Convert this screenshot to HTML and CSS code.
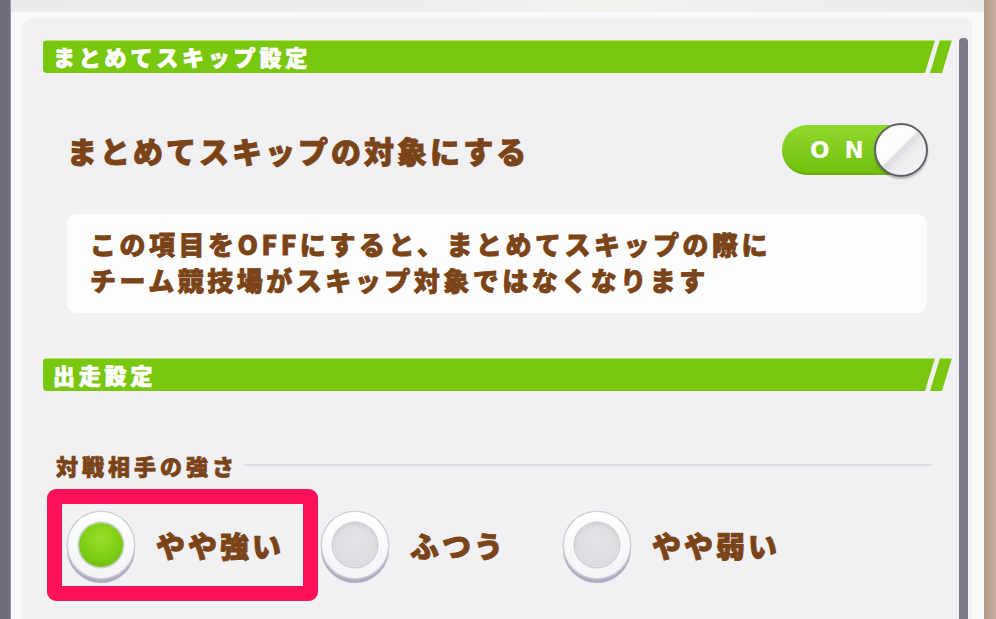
FILE: index.html
```html
<!DOCTYPE html>
<html lang="ja">
<head>
<meta charset="utf-8">
<title>設定</title>
<link rel="stylesheet" href="styles.css">
</head>
<body>
<div class="screen">
  <div class="edge-left"></div>
  <div class="frame">
    <div class="topband"></div>
    <div class="frame-body">
      <div class="panel">
        <div class="scrollbar"></div>

        <div class="section-bar">
          <div class="section-main">まとめてスキップ設定</div>
          <div class="section-stripe"></div>
        </div>

        <div class="setting-row">
          <div class="setting-title">まとめてスキップの対象にする</div>
          <div class="toggle">
            <div class="toggle-track">ON</div>
            <div class="toggle-knob"></div>
          </div>
        </div>

        <div class="note">
          <div>この項目をOFFにすると、まとめてスキップの際に</div>
          <div>チーム競技場がスキップ対象ではなくなります</div>
        </div>

        <div class="section-bar section-gap">
          <div class="section-main">出走設定</div>
          <div class="section-stripe"></div>
        </div>

        <div class="subhead">対戦相手の強さ</div>

        <div class="radios">
          <div class="radio-item item-1">
            <div class="radio"><div class="dot dot-on"></div></div>
            <div class="radio-label">やや強い</div>
          </div>
          <div class="radio-item item-2">
            <div class="radio"><div class="dot"></div></div>
            <div class="radio-label">ふつう</div>
          </div>
          <div class="radio-item">
            <div class="radio"><div class="dot"></div></div>
            <div class="radio-label">やや弱い</div>
          </div>
          <div class="highlight"></div>
        </div>
      </div>
    </div>
  </div>
  <div class="edge-right"></div>
</div>
</body>
</html>
```

FILE: styles.css
```css
* { box-sizing: border-box; }

html, body {
  margin: 0;
  padding: 0;
}

body {
  width: 996px;
  height: 619px;
  overflow: hidden;
  background: #f9f9fb;
  font-family: "Noto Sans CJK JP", "Noto Sans", sans-serif;
  font-weight: 900;
  color: #7a4418;
}

.screen {
  display: flex;
  width: 996px;
  height: 619px;
  overflow: hidden;
}

.edge-left {
  width: 11px;
  background: #6f6e7a;
  border-right: 1px solid #9a99a3;
}

.frame {
  flex: 1;
  display: flex;
  flex-direction: column;
  background: #f9f9fb;
}

.topband {
  height: 12px;
  background: linear-gradient(90deg, #ebebee 0%, #ededf0 40%, #f1f1ee 60%, #ebebee 100%);
}

.frame-body {
  flex: 1;
  display: flex;
  padding: 6px 12px 0 11px;
}

.panel {
  flex: 1;
  position: relative;
  background: #f1f0f3;
  border-radius: 10px 10px 0 0;
  padding: 22px 20px 0 21px;
}

.edge-right {
  width: 12px;
  background: linear-gradient(90deg, #b49a89, #c7b1a2);
}

.scrollbar {
  position: absolute;
  right: 4px;
  top: 20px;
  bottom: 0;
  width: 9px;
  background: #7c7a89;
  border-radius: 4px 4px 0 0;
}

/* section header bar */
.section-bar {
  display: flex;
  height: 33px;
}

.section-gap {
  margin-top: 45px;
}

.section-main {
  flex: 1;
  position: relative;
  margin-right: 10px;
  background: linear-gradient(#b3e670 0, #b3e670 1px, #79c70f 1px, #79c70f 100%);
  border-radius: 4px 0 0 4px;
  color: #fff;
  font-size: 22px;
  line-height: 33px;
  letter-spacing: 3.8px;
  padding-left: 10px;
  -webkit-text-stroke: 0.7px #fff;
}

.section-main::after {
  content: "";
  position: absolute;
  top: 0;
  right: -10px;
  width: 10px;
  height: 100%;
  background: inherit;
  clip-path: polygon(0 0, 100% 0, 0 100%);
}

.section-stripe {
  width: 22px;
  margin-left: -5px;
  background: linear-gradient(#b3e670 0, #b3e670 1px, #79c70f 1px, #79c70f 100%);
  clip-path: polygon(10px 0, 22px 0, 12px 100%, 0 100%);
}

/* toggle row */
.setting-row {
  display: flex;
  align-items: center;
  justify-content: space-between;
  margin-top: 50px;
  padding: 0 24px;
  height: 54px;
}

.setting-title {
  font-size: 30px;
  letter-spacing: 3px;
  line-height: 40px;
  -webkit-text-stroke: 0.9px #7a4418;
}

.toggle {
  position: relative;
  width: 146px;
  height: 54px;
}

.toggle-track {
  width: 136px;
  height: 50px;
  margin-top: 2px;
  border-radius: 25px;
  background: linear-gradient(#8fd92e, #72bf0c);
  box-shadow: inset 0 -2px 0 rgba(60, 110, 0, 0.18);
  color: #fff;
  font-family: "DejaVu Sans", "Noto Sans", sans-serif;
  font-weight: 700;
  font-size: 23px;
  line-height: 50px;
  letter-spacing: 15px;
  padding-left: 28px;
}

.toggle-knob {
  position: absolute;
  right: 0;
  top: 0;
  width: 54px;
  height: 54px;
  border-radius: 50%;
  border: 2px solid #5f5f64;
  background: linear-gradient(135deg, #ffffff 0%, #fbfbfc 46%, #dcdce0 50%, #ececef 62%, #f7f7f8 100%);
  box-shadow: 0 2px 2px rgba(0, 0, 0, 0.25);
}

/* info box */
.note {
  margin: 37px 25px 0 24px;
  background: #fdfdfd;
  border-radius: 10px;
  padding: 12px 23px 15px;
  font-size: 26px;
  line-height: 36px;
  letter-spacing: 3.5px;
  -webkit-text-stroke: 0.8px #7a4418;
}

/* subheading */
.subhead {
  display: flex;
  align-items: center;
  margin-top: 61px;
  padding: 0 20px 0 13px;
  font-size: 22px;
  line-height: 26px;
  letter-spacing: 4px;
  -webkit-text-stroke: 0.7px #7a4418;
}

.subhead::after {
  content: "";
  flex: 1;
  height: 2px;
  margin-left: 6px;
  background: #dedee3;
}

/* radios */
.radios {
  position: relative;
  display: flex;
  align-items: center;
  margin-top: 34px;
  padding-left: 25px;
  height: 66px;
}

.radio-item {
  display: flex;
  align-items: center;
  gap: 22px;
}

.item-1 { width: 254px; }
.item-2 { width: 242px; }

.radio {
  width: 66px;
  height: 66px;
  border-radius: 50%;
  display: flex;
  align-items: center;
  justify-content: center;
  background: linear-gradient(#ffffff, #f3f3f6);
  box-shadow: 0 0 0 1.5px #cfcfd7, 0 4px 0 1px #aeacc0;
}

.dot {
  width: 44px;
  height: 44px;
  border-radius: 50%;
  background: radial-gradient(circle at 50% 40%, #e4e4e8 0%, #d8d8de 100%);
  box-shadow: 0 0 0 1.5px #cfcfd6, inset 0 2px 2px rgba(0, 0, 0, 0.06);
}

.dot-on {
  background: radial-gradient(circle at 50% 35%, #96de2c 0%, #7ccb13 60%, #68b20c 100%);
  box-shadow: 0 0 0 1.5px #c9c9d0;
}

.radio-label {
  font-size: 29px;
  letter-spacing: 3px;
  line-height: 40px;
  -webkit-text-stroke: 0.9px #7a4418;
}

.highlight {
  position: absolute;
  left: 4px;
  top: -23px;
  width: 271px;
  height: 112px;
  border: 15px solid #fd1259;
  border-radius: 9px;
}
```
